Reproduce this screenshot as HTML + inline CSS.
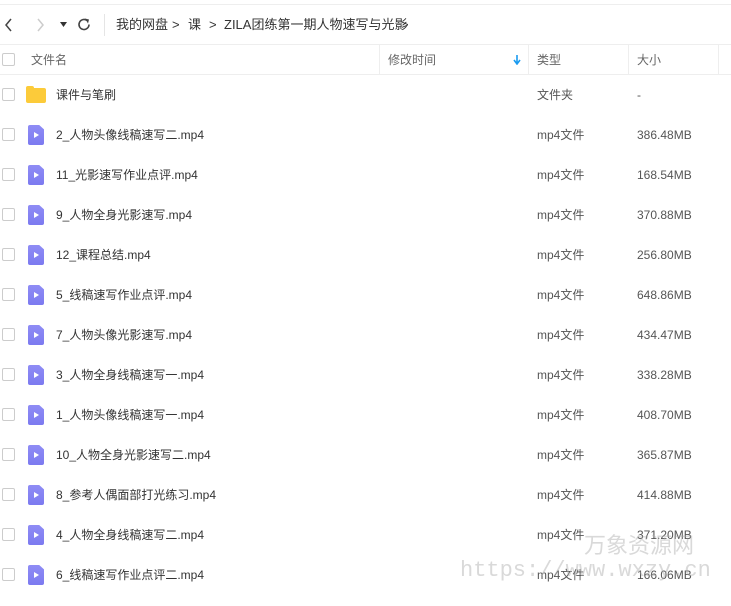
<!DOCTYPE html>
<html><head><meta charset="utf-8"><style>
*{margin:0;padding:0;box-sizing:border-box}
body{width:731px;height:606px;background:#fff;font-family:"Liberation Sans","Noto Sans CJK SC",sans-serif;font-size:12px;color:#333;position:relative;overflow:hidden}
span{line-height:16px;display:block;white-space:nowrap}
.topline{position:absolute;left:0;right:0;top:4px;border-top:1px solid #eee}
.nav{position:absolute;top:14px;left:0;height:22px;width:731px}
.nav span{position:absolute;top:3px;font-size:13px}
.hdr{position:absolute;top:44px;left:0;width:731px;height:31px;border-top:1px solid #eee;border-bottom:1px solid #eee;color:#666}
.hdr span{position:absolute;top:7px}
.div{position:absolute;top:0;height:30px;border-left:1px solid #eee}
.cb{position:absolute;left:2px;width:13px;height:13px;border:1px solid #ccc;border-radius:2px}
.row{position:absolute;left:0;width:731px;height:40px}
.row .cb{top:13px}
.row .n{position:absolute;left:56px;top:12px}
.row .t{position:absolute;left:537px;top:12px;color:#555}
.row .s{position:absolute;left:637px;top:12px;color:#555}
.ico{position:absolute;left:28px;top:10px;width:16px;height:20px;background:linear-gradient(#8f8cf5,#7c7af0);border-radius:2px;clip-path:polygon(0 0,70% 0,100% 22%,100% 100%,0 100%)}
.ico:after{content:"";position:absolute;left:6px;top:7px;border-left:5px solid #fff;border-top:3px solid transparent;border-bottom:3px solid transparent}
.fold{position:absolute;left:26px;top:13px;width:20px;height:15px;background:#fccb3a;border-radius:2px}
.fold:before{content:"";position:absolute;left:0;top:-2px;width:8px;height:4px;background:#fccb3a;border-radius:2px 2px 0 0}
.wm{position:absolute;color:rgba(170,170,170,.45);font-size:22px;line-height:26px}
</style></head><body>
<div class="topline"></div>
<div class="nav">
<svg style="position:absolute;left:4px;top:4px" width="10" height="14"><path d="M7 1 L2 7 L7 13" stroke="#444" stroke-width="1.5" fill="none"/></svg>
<svg style="position:absolute;left:36px;top:4px" width="10" height="14"><path d="M2 1 L7 7 L2 13" stroke="#ccc" stroke-width="1.5" fill="none"/></svg>
<svg style="position:absolute;left:60px;top:8px" width="8" height="6"><path d="M0 0H7L3.5 5Z" fill="#333"/></svg>
<svg style="position:absolute;left:77px;top:3px" width="15" height="15"><path d="M12 7.5A5 5 0 1 1 10 3.5" stroke="#444" stroke-width="1.6" fill="none"/><path d="M8 1.5L12 2.5L11 6.5Z" fill="#444"/></svg>
<div style="position:absolute;left:104px;top:0;height:22px;border-left:1px solid #e5e5e5"></div>
<span style="left:116px">我的网盘</span><span style="left:172px">&gt;</span><span style="left:188px">课</span><span style="left:209px">&gt;</span><span style="left:224px">ZILA团练第一期人物速写与光影</span><span style="left:401px">&gt;</span>
</div>
<div class="hdr">
<div class="cb" style="top:8px"></div>
<span style="left:31px">文件名</span>
<div class="div" style="left:379px"></div><span style="left:388px">修改时间</span>
<svg style="position:absolute;left:513px;top:10px" width="8" height="10"><path d="M4 0V8M1 5L4 9L7 5" stroke="#1a9bf0" stroke-width="1.6" fill="none"/></svg>
<div class="div" style="left:528px"></div><span style="left:537px">类型</span>
<div class="div" style="left:628px"></div><span style="left:637px">大小</span>
<div class="div" style="left:718px"></div>
</div>
<div class="row" style="top:75px"><div class="cb"></div><div class="fold"></div><span class="n">课件与笔刷</span><span class="t">文件夹</span><span class="s">-</span></div>
<div class="row" style="top:115px"><div class="cb"></div><div class="ico"></div><span class="n">2_人物头像线稿速写二.mp4</span><span class="t">mp4文件</span><span class="s">386.48MB</span></div>
<div class="row" style="top:155px"><div class="cb"></div><div class="ico"></div><span class="n">11_光影速写作业点评.mp4</span><span class="t">mp4文件</span><span class="s">168.54MB</span></div>
<div class="row" style="top:195px"><div class="cb"></div><div class="ico"></div><span class="n">9_人物全身光影速写.mp4</span><span class="t">mp4文件</span><span class="s">370.88MB</span></div>
<div class="row" style="top:235px"><div class="cb"></div><div class="ico"></div><span class="n">12_课程总结.mp4</span><span class="t">mp4文件</span><span class="s">256.80MB</span></div>
<div class="row" style="top:275px"><div class="cb"></div><div class="ico"></div><span class="n">5_线稿速写作业点评.mp4</span><span class="t">mp4文件</span><span class="s">648.86MB</span></div>
<div class="row" style="top:315px"><div class="cb"></div><div class="ico"></div><span class="n">7_人物头像光影速写.mp4</span><span class="t">mp4文件</span><span class="s">434.47MB</span></div>
<div class="row" style="top:355px"><div class="cb"></div><div class="ico"></div><span class="n">3_人物全身线稿速写一.mp4</span><span class="t">mp4文件</span><span class="s">338.28MB</span></div>
<div class="row" style="top:395px"><div class="cb"></div><div class="ico"></div><span class="n">1_人物头像线稿速写一.mp4</span><span class="t">mp4文件</span><span class="s">408.70MB</span></div>
<div class="row" style="top:435px"><div class="cb"></div><div class="ico"></div><span class="n">10_人物全身光影速写二.mp4</span><span class="t">mp4文件</span><span class="s">365.87MB</span></div>
<div class="row" style="top:475px"><div class="cb"></div><div class="ico"></div><span class="n">8_参考人偶面部打光练习.mp4</span><span class="t">mp4文件</span><span class="s">414.88MB</span></div>
<div class="row" style="top:515px"><div class="cb"></div><div class="ico"></div><span class="n">4_人物全身线稿速写二.mp4</span><span class="t">mp4文件</span><span class="s">371.20MB</span></div>
<div class="row" style="top:555px"><div class="cb"></div><div class="ico"></div><span class="n">6_线稿速写作业点评二.mp4</span><span class="t">mp4文件</span><span class="s">166.06MB</span></div>
<div class="wm" style="left:584px;top:533px">万象资源网</div>
<div class="wm" style="left:460px;top:558px;font-family:'Liberation Mono',monospace;font-size:22px">https://www.wxzy.cn</div>
</body></html>
